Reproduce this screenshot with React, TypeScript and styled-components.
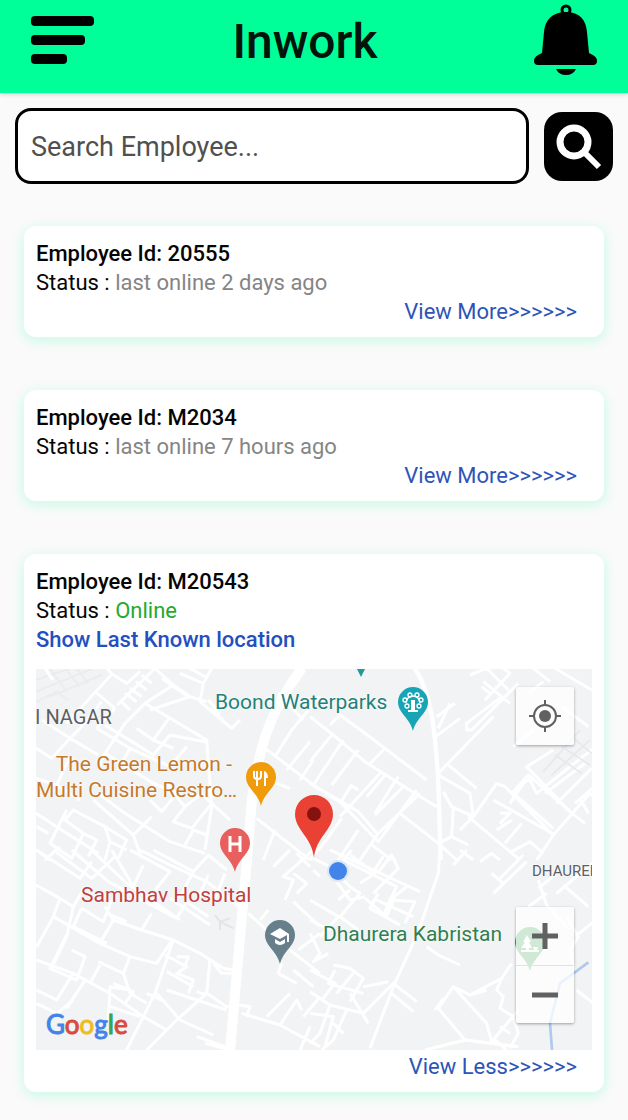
import React from 'react';
import styled, { createGlobalStyle } from 'styled-components';

const GlobalStyle = createGlobalStyle`
  *, *::before, *::after { box-sizing: border-box; }
  body {
    margin: 0;
    background: #fafafa;
    color: #050505;
    font-family: Roboto, "Noto Sans", sans-serif;
    font-size: 22px;
    line-height: 29px;
  }
  button { font: inherit; color: inherit; border: 0; padding: 0; background: none; cursor: pointer; }
`;

const Header = styled.header`
  display: grid;
  grid-template-columns: 64px 1fr 64px;
  align-items: center;
  height: 93px;
  padding: 0 30px 14px;
  background: #00ff99;
  box-shadow: 0 1px 5px rgba(0, 0, 0, 0.2);
`;

const IconButton = styled.button`
  display: grid;
  place-items: center;
  width: 64px;
  height: 72px;
  svg { display: block; }
`;

const Title = styled.h1`
  margin: 0;
  padding: 4px 18px 0 0;
  text-align: center;
  font-size: 48px;
  line-height: 56px;
  font-weight: 500;
  color: #03150b;
`;

const SearchBar = styled.form`
  display: flex;
  align-items: center;
  gap: 15px;
  padding: 15px;
`;

const SearchInput = styled.input`
  flex: 1;
  min-width: 0;
  height: 76px;
  padding: 2px 13px 0;
  border: 3px solid #000;
  border-radius: 16px;
  background: #fff;
  font: inherit;
  font-size: 27px;
  color: #222;
  outline: 0;
  &::placeholder { color: #505050; opacity: 1; }
`;

const SearchButton = styled.button`
  flex: none;
  width: 69px;
  height: 69px;
  border-radius: 18px;
  background: #000;
  svg { display: block; }
`;

const List = styled.main`
  display: flex;
  flex-direction: column;
  gap: 53px;
  padding: 27px 24px 30px;
`;

const Card = styled.article`
  display: flex;
  flex-direction: column;
  padding: 13px 12px 11px;
  border-radius: 12px;
  background: #fff;
  box-shadow: 0 3px 12px 2px rgba(0, 255, 153, 0.17);
`;

const EmployeeId = styled.h2`
  margin: 0;
  font-size: 22px;
  line-height: 29px;
  font-weight: 500;
`;

const Status = styled.p<{ $online?: boolean }>`
  margin: 0;
  span { color: ${(p) => (p.$online ? '#22ab2c' : '#858585')}; }
`;

const LocationLink = styled.a`
  align-self: flex-start;
  font-weight: 500;
  color: #2350c0;
  text-decoration: none;
`;

const ToggleLink = styled.a`
  align-self: flex-end;
  padding-right: 15px;
  color: #2d55b8;
  text-decoration: none;
`;

const MapFrame = styled.section`
  position: relative;
  height: 381px;
  margin: 15px 0 2px;
  overflow: hidden;
  background: #f1f3f4;
`;

const MapCanvas = styled.svg`
  display: block;
  width: 100%;
  height: 100%;
`;

const MapLabel = styled.span<{ $x: number; $y: number; $color: string; $size?: number }>`
  position: absolute;
  left: calc(50% + ${(p) => p.$x}px);
  top: ${(p) => p.$y}px;
  color: ${(p) => p.$color};
  font-size: ${(p) => p.$size ?? 21}px;
  line-height: 26px;
  text-align: right;
  white-space: nowrap;
  text-shadow: 0 0 2px #fff, 0 0 2px #fff;
`;

const MapControls = styled.div<{ $bottom?: boolean }>`
  position: absolute;
  right: 18px;
  ${(p) => (p.$bottom ? 'bottom: 27px;' : 'top: 18px;')}
  width: 58px;
  border-radius: 2px;
  background: rgba(255, 255, 255, 0.76);
  box-shadow: 0 1px 3px rgba(0, 0, 0, 0.35);
`;

const MapButton = styled.button`
  display: grid;
  place-items: center;
  width: 58px;
  height: 58px;
  & + & { border-top: 1px solid #e2e2e2; }
  svg { display: block; }
`;

const GoogleMark = styled.span`
  position: absolute;
  left: 10px;
  bottom: 11px;
  font-size: 26px;
  line-height: 30px;
  font-family: Lato, sans-serif;
  -webkit-text-stroke: 1px currentColor;
`;

const Letter = styled.span<{ $color: string }>`
  color: ${(p) => p.$color};
  -webkit-text-stroke: 1px ${(p) => p.$color};
`;

/* Teardrop marker whose tip is at 0,0 */
const pinPath = 'M0 0C-3-13-15-18-15-29A15 15 0 1 1 15-29C15-18 3-13 0 0Z';

function Roads() {
  return (
    <g fill="none" stroke="#fff" strokeWidth="9" strokeLinejoin="round">
      <g transform="translate(-6 -9) scale(.33333)">
        <path strokeWidth="6" stroke="#eaecee" d="M18 60L120 25M18 95L190 25M60 110L215 45M60 25L110 95M105 25L150 80M20 125L80 95L115 120M140 25L175 70" />
        <path d="M45 25L68 60M230 25L246 42L110 190M246 42L290 70L330 35M195 95L255 145M215 125L150 205L120 235L35 180M255 145L200 205M262 135L375 25M270 120L300 150M285 100L320 125M300 85L335 110M318 65L350 90M335 45L365 70M375 25L430 75L345 130L285 190L225 280L205 320M360 150L480 110L530 125M430 75L480 110M395 55L475 110M450 40L520 70L545 25M470 20L525 50M520 70L510 125L605 205L630 180M535 120L570 160M540 145L580 180" />
        <path d="M345 130L530 240L545 440L525 570M225 195L370 285L420 225L525 245M420 170L370 240L430 265M370 240L320 205M200 205L300 265L265 330M18 265L65 295L120 235L205 285M18 355L80 375L150 420M80 375L120 290M190 420L310 525L365 470M205 400L285 460M285 460L420 545L525 580M360 420L395 455L440 400L410 370M430 400L465 440L515 400L545 430L485 505L430 485L465 440M465 555L490 510L530 525M225 280L370 370L445 400M300 265L420 320L470 260" />
        <path d="M18 460L110 520L205 580M110 450L60 550L125 595L160 520L105 480L130 450L225 500L290 540L265 595M225 500L240 545L290 570M240 545L225 600M310 525L335 595M20 500L55 520M45 600L90 560M160 520L200 540L175 590M20 570L60 600M545 430L600 480" />
        <path d="M705 265L870 390M735 290L785 210L870 110M820 180L745 100M770 330L840 245M680 475L840 600M735 510L700 600M850 300L810 360M780 385L740 370" />
      </g>
      <g transform="translate(274 -9) scale(.33333)">
        <path d="M0 170L70 225L165 305L290 385L380 440M60 195L90 165L165 220L350 360M0 370L145 455L205 525M65 225L0 305M100 240L10 375M145 270L65 375M215 335L90 470M225 265L180 310M285 375L195 465M320 390L205 545L90 425L45 400M265 350L245 380L195 460M230 340L170 410M125 375L90 430M145 390L120 375M0 600L45 545L95 475M145 510L85 600M205 520L150 600M270 460L385 550L440 600M180 550L245 600M330 400L205 520M385 340L550 170M370 235L450 175M385 205L420 130M380 170L435 130" />
        <path d="M520 65L575 110L470 190L470 210L485 210L625 70M525 120L600 40L580 25M480 45L530 25L595 90M545 105L515 80M575 110L600 130M385 345L480 400L490 470L560 370L585 380L730 525L840 400M415 315L500 385M490 470L425 440L400 395M430 440L425 530L385 550M425 530L475 555M475 470L630 600M490 470L450 510M610 395L655 345L780 455L650 320L730 270M550 420L735 525M605 395L730 505M600 430L640 370L670 350M655 350L680 400L780 320L870 250M705 400L825 310M740 430L845 325M780 455L825 490M795 430L870 365M810 415L835 460M835 395L870 430M570 490L600 460L570 460M560 510L605 480M585 550L635 490M605 575L660 545L700 580M730 525L680 600M670 25L720 65M735 25L845 90M755 140L835 200M670 210L610 260M700 65L660 95" />
        <path strokeWidth="5" stroke="#e6e9eb" d="M700 335L810 210M725 345L840 240M735 285L815 340M755 260L840 315M785 230L845 280" />
        <path strokeWidth="13" d="M315 25C365 105 375 205 385 365L392 600" />
      </g>
      <g transform="translate(-6 181) scale(.33333)">
        <path d="M18 0L150 85L185 35M70 0L185 85L260 15M125 0L235 95L440 205M185 0L290 100L450 210M245 0L310 110L340 45M300 0L420 65L375 120M330 0L420 45L530 95L640 180M370 0L490 65L450 140M490 65L535 15L590 60M535 75L500 155M585 70L550 160M420 145L540 225M440 205L470 155L535 200M18 105L90 145L70 200L210 280L300 320M90 145L130 170L165 110M130 170L110 260L65 355M70 200L20 290M155 175L220 215L245 150M155 175L130 230L230 280M210 280L250 210L335 240L365 190M335 240L430 270L510 310L580 355L610 360M250 210L225 170M230 190L290 215M18 330L130 370L240 430L340 500L410 540M110 255L60 355L140 390L165 320L125 300M130 370L80 450L20 420M165 390L110 475M210 345L180 400M205 335L280 370L300 320L380 340L430 265M280 370L300 430L350 460" />
        <path d="M430 270L375 430L290 600M405 315L470 350L440 370L490 390L475 430M410 365L490 410M440 320L475 320L460 360M540 330L530 430L440 510L350 600M550 340L575 370L610 370M530 430L590 470L630 465L660 470L650 500M410 420L590 480M380 430L450 510L550 555M530 435L500 425M525 580L600 600M300 420L240 410L235 510M250 400L310 425L285 460M350 430L405 455M20 460L80 490L130 450M240 470L330 500M500 560L600 595M655 190L710 240M635 490L750 525L870 590M840 530L810 600M710 500L780 430M750 525L800 450L815 480M755 340L745 370L800 400M780 300L870 370M870 250L805 300M790 155L870 230M765 150L790 90L760 80L850 0M800 130L830 100L790 70M730 50L780 0M690 210L715 180M840 50L800 10M850 60L870 80M850 410L790 360M870 440L820 500" />
        <path strokeWidth="6" stroke="#e2e4e6" d="M555 195L570 215L600 205M570 215L570 240M570 215L610 235" />
      </g>
      <g transform="translate(274 181) scale(.33333)">
        <path d="M0 20L60 50L120 110L150 130L90 200L145 240M60 0L330 125M90 25L60 60M120 15L190 65L220 20M125 0L100 30L260 110L230 170M150 100L210 60L245 15L265 55L190 130M200 150L310 200M165 145L230 200L250 150L315 155L285 220M205 130L180 175L270 225M0 150L85 200L30 260M0 210L60 240M0 250L30 310L10 335L55 310M120 120L85 150M290 110L240 150L220 200M80 95L120 150L165 140M350 290L385 315L450 345" />
        <path d="M390 0L385 70L335 215L300 300L250 410L180 595M430 45L470 0M450 0L490 30M510 35L545 10L570 30M550 130L650 35M580 100L545 70M570 85L640 15M685 90L710 165L770 230M685 115L740 70M740 130L870 20M760 105L835 170M655 170L710 130M795 260L870 200M770 200L805 260L780 300L795 370M800 420L870 475" />
        <path d="M0 425L60 465L160 490L250 400L320 455M60 465L30 550L0 580M110 480L70 570L35 600M120 430L175 520M75 360L55 400L160 430M70 345L120 355L160 385L120 455M0 360L75 400L35 450M130 370L80 430M160 410L235 395M245 430L310 485M0 490L70 500L45 590M70 520L100 550M345 600L465 570L625 590M465 570L385 475L430 410L480 435L575 385L605 340M430 410L530 520L545 575L625 480M575 385L560 420L580 440L570 475L610 500L625 550L600 595M570 530L600 550M480 435L530 420M375 480L400 445M555 570L590 600" />
        <path strokeWidth="8" stroke="#afcaed" d="M835 337L750 400L720 520L726 600" />
      </g>
      <path strokeWidth="10" d="M266 -1C232 45 223 80 216 130L211 191L203 280L194 382" />
    </g>
  );
}

function Pins() {
  return (
    <g>
      <path d="M321 0H329L325 8Z" fill="#24989b" />
      <g transform="translate(377 62)">
        <path d={pinPath} fill="#17a5b6" />
        <g fill="none" stroke="#fff" strokeWidth="1.3">
          <path d="M-7-28A7 7 0 0 1 7-28" />
          <circle cx="-3" cy="-36" r="2" /><circle cx="4" cy="-36" r="2" />
          <circle cx="-8" cy="-31" r="2" /><circle cx="8" cy="-31" r="2" /><circle cx="-6" cy="-25" r="2" /><circle cx="6" cy="-25" r="2" />
        </g>
        <path d="M-2-31H2V-21H5V-19H-5V-21H-2Z" fill="#fff" />
      </g>
      <g transform="translate(225 137)">
        <path d={pinPath} fill="#ef9b0c" />
        <path d="M-7-35V-30Q-7-27-3-27Q0-27 0-30V-35M-4-35V-20" fill="none" stroke="#fff" strokeWidth="2" />
        <path d="M5-20H3V-35Q7-34 7-28H5Z" fill="#fff" />
      </g>
      <g transform="translate(199 203)">
        <path d={pinPath} fill="#e95f5d" />
        <path d="M-5-36V-20M5-36V-20M-5-28H5" stroke="#fff" strokeWidth="3" />
      </g>
      <g transform="translate(244 295)">
        <path d={pinPath} fill="#667f8b" />
        <path d="M0-36L-10-30 0-25 7-29V-22H9V-30ZM-5-25V-21Q0-17 5-21V-25L0-22Z" fill="#fff" />
      </g>
      <g transform="translate(494 302)">
        <path d={pinPath} fill="#3a9f56" />
        <path d="M-3-36L-7-29H-5L-9-23H-4V-21H-9V-19H9V-21H7L8-24H3L4-21H-1V-23H2L-1-29H1Z" fill="#fff" />
      </g>
      <path d="M278 189C276 168 259 161 259 145A19 19 0 0 1 297 145C297 161 280 168 278 189Z" fill="#e94235" />
      <circle cx="278" cy="145" r="7" fill="#85120f" />
      <circle cx="302" cy="202" r="11" fill="#dce8f9" />
      <circle cx="302" cy="202" r="9" fill="#4384eb" />
    </g>
  );
}

function EmployeeMap() {
  return (
    <MapFrame aria-label="Last known location">
      <MapCanvas viewBox="0 0 556 381" preserveAspectRatio="xMidYMid slice" aria-hidden="true">
        <rect width="556" height="381" fill="#f1f3f4" />
        <Roads />
        <Pins />
      </MapCanvas>
      <MapLabel $x={-279} $y={35} $color="#5c5f63" $size={20}>I NAGAR</MapLabel>
      <MapLabel $x={-99} $y={20} $color="#238177">Boond Waterparks</MapLabel>
      <MapLabel $x={-278} $y={82} $color="#c5792a">The Green Lemon -&nbsp;<br />Multi Cuisine Restro…</MapLabel>
      <MapLabel $x={-233} $y={213} $color="#bf403f">Sambhav Hospital</MapLabel>
      <MapLabel $x={9} $y={252} $color="#2f8050">Dhaurera Kabristan</MapLabel>
      <MapLabel $x={218} $y={189} $color="#5c5f63" $size={15}>DHAURERA</MapLabel>
      <GoogleMark>
        <Letter $color="#4384eb">G</Letter>
        <Letter $color="#d94b42">o</Letter>
        <Letter $color="#efbd1c">o</Letter>
        <Letter $color="#4384eb">g</Letter>
        <Letter $color="#35a453">l</Letter>
        <Letter $color="#d94b42">e</Letter>
      </GoogleMark>
      <MapControls>
        <MapButton type="button" aria-label="Centre on location">
          <svg width="34" height="34" viewBox="0 0 34 34" fill="none" stroke="#616161" strokeWidth="2">
            <circle cx="17" cy="17" r="11" />
            <circle cx="17" cy="17" r="6" fill="#616161" stroke="none" />
            <path d="M17 1V6M17 28V33M1 17H6M28 17H33" />
          </svg>
        </MapButton>
      </MapControls>
      <MapControls $bottom>
        <MapButton type="button" aria-label="Zoom in">
          <svg width="26" height="26" viewBox="0 0 26 26" stroke="#616161" strokeWidth="5"><path d="M13 0V26M0 13H26" /></svg>
        </MapButton>
        <MapButton type="button" aria-label="Zoom out">
          <svg width="26" height="26" viewBox="0 0 26 26" stroke="#616161" strokeWidth="5"><path d="M0 13H26" /></svg>
        </MapButton>
      </MapControls>
    </MapFrame>
  );
}

interface EmployeeProps {
  id: string;
  status: string;
  online?: boolean;
}

function EmployeeCard({ id, status, online }: EmployeeProps) {
  return (
    <Card>
      <EmployeeId>Employee Id: {id}</EmployeeId>
      <Status $online={online}>Status : <span>{status}</span></Status>
      {online && <LocationLink href="#location">Show Last Known location</LocationLink>}
      {online && <EmployeeMap />}
      <ToggleLink href={`#${id}`}>{online ? 'View Less' : 'View More'}&gt;&gt;&gt;&gt;&gt;&gt;</ToggleLink>
    </Card>
  );
}

const employees: EmployeeProps[] = [
  { id: '20555', status: 'last online 2 days ago' },
  { id: 'M2034', status: 'last online 7 hours ago' },
  { id: 'M20543', status: 'Online', online: true },
];

export default function App() {
  return (
    <>
      <GlobalStyle />
      <Header>
        <IconButton type="button" aria-label="Menu">
          <svg width="64" height="50" viewBox="0 0 64 50">
            <rect x="1" y="1" width="63" height="10" rx="4" />
            <rect x="1" y="20" width="54" height="10" rx="4" />
            <rect x="1" y="39" width="36" height="10" rx="4" />
          </svg>
        </IconButton>
        <Title>Inwork</Title>
        <IconButton type="button" aria-label="Notifications">
          <svg width="64" height="72" viewBox="0 0 64 72">
            <circle cx="32" cy="6" r="4" fill="none" stroke="#000" strokeWidth="3" />
            <path d="M32 8C18 8 11 16 10 28L8 49Q0 52 0 57Q0 61 4 61H59Q63 61 63 57Q63 52 55 49L53 28C52 16 46 8 32 8Z" />
            <path d="M22 65H42Q39 71 32 71T22 65Z" />
          </svg>
        </IconButton>
      </Header>
      <SearchBar onSubmit={(e) => e.preventDefault()}>
        <SearchInput type="text" aria-label="Search Employee" placeholder="Search Employee..." />
        <SearchButton type="submit" aria-label="Search">
          <svg width="69" height="69" viewBox="0 0 69 69" fill="none" stroke="#fff">
            <circle cx="30" cy="30" r="14" strokeWidth="7" />
            <path d="M40 40L55 55" strokeWidth="6" />
          </svg>
        </SearchButton>
      </SearchBar>
      <List>
        {employees.map((e) => <EmployeeCard key={e.id} {...e} />)}
      </List>
    </>
  );
}
